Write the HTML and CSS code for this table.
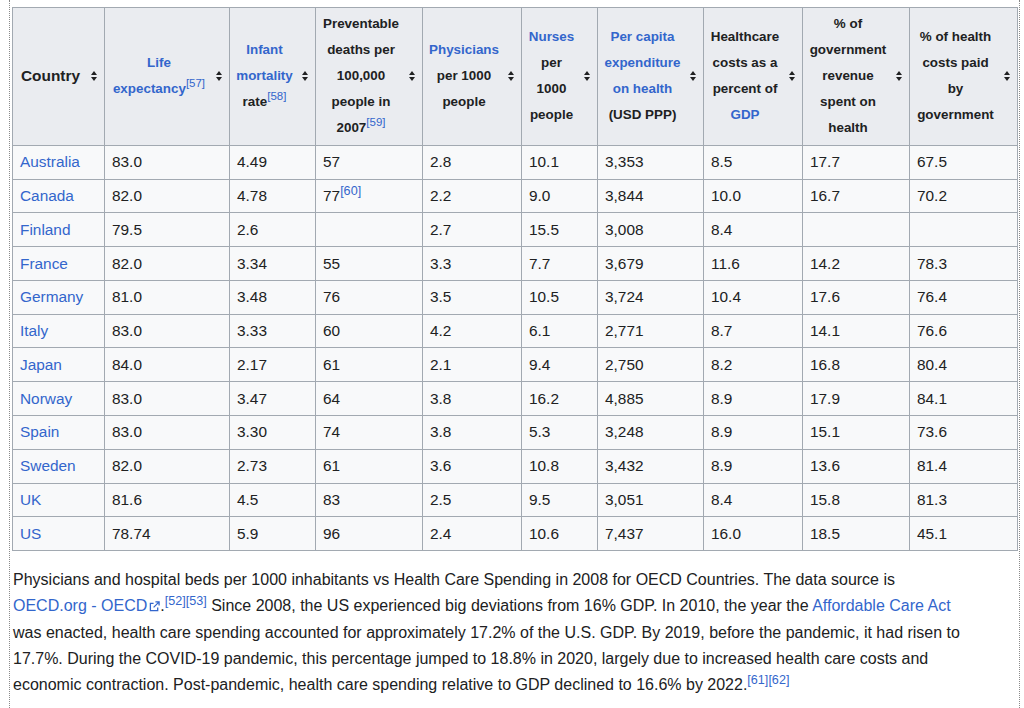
FILE: index.html
```html
<!DOCTYPE html>
<html lang="en">
<head>
<meta charset="utf-8">
<title>Health care comparison</title>
<link rel="stylesheet" href="styles.css">
</head>
<body>
<div class="frame">
<table class="wikitable">
<colgroup>
<col class="c1"><col class="c2"><col class="c3"><col class="c4"><col class="c5"><col class="c6"><col class="c7"><col class="c8"><col class="c9"><col class="c10">
</colgroup>
<thead>
<tr>
<th class="country"><div class="h"><span class="t">Country</span><span class="sort"><svg width="6" height="10" viewBox="0 0 6 10"><path d="M3 0 L6 4 L0 4Z M0 6 L6 6 L3 10Z"/></svg></span></div></th>
<th><div class="h"><span class="t"><a>Life expectancy</a><sup><a>[57]</a></sup></span><span class="sort"><svg width="6" height="10" viewBox="0 0 6 10"><path d="M3 0 L6 4 L0 4Z M0 6 L6 6 L3 10Z"/></svg></span></div></th>
<th><div class="h"><span class="t"><a>Infant mortality</a> rate<sup><a>[58]</a></sup></span><span class="sort"><svg width="6" height="10" viewBox="0 0 6 10"><path d="M3 0 L6 4 L0 4Z M0 6 L6 6 L3 10Z"/></svg></span></div></th>
<th><div class="h"><span class="t">Preventable deaths per 100,000 people in 2007<sup><a>[59]</a></sup></span><span class="sort"><svg width="6" height="10" viewBox="0 0 6 10"><path d="M3 0 L6 4 L0 4Z M0 6 L6 6 L3 10Z"/></svg></span></div></th>
<th><div class="h"><span class="t"><a>Physicians</a> per 1000 people</span><span class="sort"><svg width="6" height="10" viewBox="0 0 6 10"><path d="M3 0 L6 4 L0 4Z M0 6 L6 6 L3 10Z"/></svg></span></div></th>
<th><div class="h"><span class="t"><a>Nurses</a> per 1000 people</span><span class="sort"><svg width="6" height="10" viewBox="0 0 6 10"><path d="M3 0 L6 4 L0 4Z M0 6 L6 6 L3 10Z"/></svg></span></div></th>
<th><div class="h"><span class="t"><a>Per capita expenditure on health</a> (USD PPP)</span><span class="sort"><svg width="6" height="10" viewBox="0 0 6 10"><path d="M3 0 L6 4 L0 4Z M0 6 L6 6 L3 10Z"/></svg></span></div></th>
<th><div class="h"><span class="t">Healthcare costs as a percent of <a>GDP</a></span><span class="sort"><svg width="6" height="10" viewBox="0 0 6 10"><path d="M3 0 L6 4 L0 4Z M0 6 L6 6 L3 10Z"/></svg></span></div></th>
<th><div class="h"><span class="t">% of government revenue spent on health</span><span class="sort"><svg width="6" height="10" viewBox="0 0 6 10"><path d="M3 0 L6 4 L0 4Z M0 6 L6 6 L3 10Z"/></svg></span></div></th>
<th><div class="h"><span class="t">% of health costs paid by government</span><span class="sort"><svg width="6" height="10" viewBox="0 0 6 10"><path d="M3 0 L6 4 L0 4Z M0 6 L6 6 L3 10Z"/></svg></span></div></th>
</tr>
</thead>
<tbody>
<tr><td><a>Australia</a></td><td>83.0</td><td>4.49</td><td>57</td><td>2.8</td><td>10.1</td><td>3,353</td><td>8.5</td><td>17.7</td><td>67.5</td></tr>
<tr><td><a>Canada</a></td><td>82.0</td><td>4.78</td><td>77<sup><a>[60]</a></sup></td><td>2.2</td><td>9.0</td><td>3,844</td><td>10.0</td><td>16.7</td><td>70.2</td></tr>
<tr><td><a>Finland</a></td><td>79.5</td><td>2.6</td><td></td><td>2.7</td><td>15.5</td><td>3,008</td><td>8.4</td><td></td><td></td></tr>
<tr><td><a>France</a></td><td>82.0</td><td>3.34</td><td>55</td><td>3.3</td><td>7.7</td><td>3,679</td><td>11.6</td><td>14.2</td><td>78.3</td></tr>
<tr><td><a>Germany</a></td><td>81.0</td><td>3.48</td><td>76</td><td>3.5</td><td>10.5</td><td>3,724</td><td>10.4</td><td>17.6</td><td>76.4</td></tr>
<tr><td><a>Italy</a></td><td>83.0</td><td>3.33</td><td>60</td><td>4.2</td><td>6.1</td><td>2,771</td><td>8.7</td><td>14.1</td><td>76.6</td></tr>
<tr><td><a>Japan</a></td><td>84.0</td><td>2.17</td><td>61</td><td>2.1</td><td>9.4</td><td>2,750</td><td>8.2</td><td>16.8</td><td>80.4</td></tr>
<tr><td><a>Norway</a></td><td>83.0</td><td>3.47</td><td>64</td><td>3.8</td><td>16.2</td><td>4,885</td><td>8.9</td><td>17.9</td><td>84.1</td></tr>
<tr><td><a>Spain</a></td><td>83.0</td><td>3.30</td><td>74</td><td>3.8</td><td>5.3</td><td>3,248</td><td>8.9</td><td>15.1</td><td>73.6</td></tr>
<tr><td><a>Sweden</a></td><td>82.0</td><td>2.73</td><td>61</td><td>3.6</td><td>10.8</td><td>3,432</td><td>8.9</td><td>13.6</td><td>81.4</td></tr>
<tr><td><a>UK</a></td><td>81.6</td><td>4.5</td><td>83</td><td>2.5</td><td>9.5</td><td>3,051</td><td>8.4</td><td>15.8</td><td>81.3</td></tr>
<tr><td><a>US</a></td><td>78.74</td><td>5.9</td><td>96</td><td>2.4</td><td>10.6</td><td>7,437</td><td>16.0</td><td>18.5</td><td>45.1</td></tr>
</tbody>
</table>
<p class="caption">Physicians and hospital beds per 1000 inhabitants vs Health Care Spending in 2008 for OECD Countries. The data source is <a>OECD.org - OECD</a><svg class="ext" width="11" height="11" viewBox="0 0 12 12"><path d="M5 2.5 H1.5 V10.5 H9.5 V7" fill="none" stroke-width="1.4"/><path d="M7 1 H11 V5 M11 1 L5 7" fill="none" stroke-width="1.4"/></svg>.<sup><a>[52]</a><a>[53]</a></sup> Since 2008, the US experienced big deviations from 16% GDP. In 2010, the year the <a>Affordable Care Act</a> was enacted, health care spending accounted for approximately 17.2% of the U.S. GDP. By 2019, before the pandemic, it had risen to 17.7%. During the COVID-19 pandemic, this percentage jumped to 18.8% in 2020, largely due to increased health care costs and economic contraction. Post-pandemic, health care spending relative to GDP declined to 16.6% by 2022.<sup><a>[61]</a><a>[62]</a></sup></p>
</div>
</body>
</html>
```

FILE: styles.css
```css
html, body {
  margin: 0;
  padding: 0;
  background: #ffffff;
}

body {
  font-family: "Liberation Sans", Arial, sans-serif;
  color: #202122;
  font-size: 15.4px;
}

.frame {
  margin-left: 9px;
  width: 1011px;
  min-height: 708px;
  box-sizing: border-box;
  border-left: 1px dotted #8a8a8a;
  border-right: 1px dotted #8a8a8a;
  padding: 7px 4px 0 2px;
}

a {
  color: #3366cc;
  text-decoration: none;
}

.wikitable {
  border-collapse: collapse;
  table-layout: fixed;
  width: 1005px;
  background: #f8f9fa;
  border: 1px solid #a2a9b1;
  color: #202122;
}

.c1 { width: 92px; }
.c2 { width: 125px; }
.c3 { width: 86px; }
.c4 { width: 107px; }
.c5 { width: 99px; }
.c6 { width: 76px; }
.c7 { width: 106px; }
.c8 { width: 99px; }
.c9 { width: 107px; }
.c10 { width: 108px; }

.wikitable th,
.wikitable td {
  border: 1px solid #a2a9b1;
}

.wikitable th {
  background: #eaecf0;
  font-size: 13.4px;
  font-weight: bold;
  line-height: 26px;
  padding: 3.4px 0 3.4px 5px;
  vertical-align: middle;
}

.wikitable th.country {
  font-size: 15.4px;
}

.h {
  display: flex;
  align-items: center;
}

.t {
  flex: 1;
  text-align: center;
}

.sort {
  flex: 0 0 21px;
  display: flex;
  justify-content: center;
  align-items: center;
}

.sort svg {
  fill: #202122;
  display: block;
}

.wikitable td {
  padding: 3.4px 7px;
  line-height: 26px;
  vertical-align: middle;
  white-space: nowrap;
}

sup {
  font-size: 12.6px;
  font-weight: normal;
  line-height: 0;
  vertical-align: 0.5em;
}

.wikitable th sup {
  font-size: 11.5px;
}

.caption {
  margin: 16px 0 0 1px;
  width: 952px;
  line-height: 26.3px;
  font-size: 16px;
}

.ext {
  stroke: #3366cc;
  margin-left: 2px;
  vertical-align: -1px;
}
```
